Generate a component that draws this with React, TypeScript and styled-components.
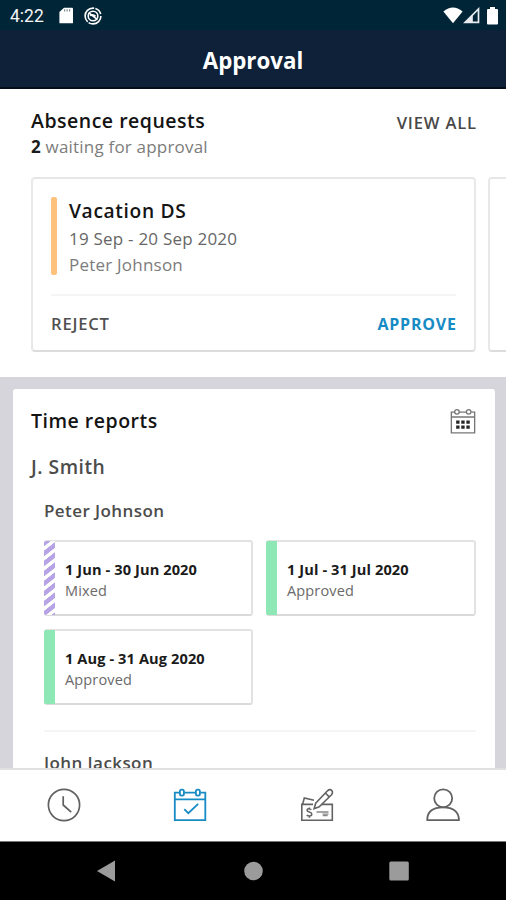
import React from 'react';
import styled, { createGlobalStyle } from 'styled-components';

const GlobalStyle = createGlobalStyle`
  *, *::before, *::after { box-sizing: border-box; }
  body { margin: 0; background: #fff; }
  svg { display: block; flex: none; }
`;

const Screen = styled.div`
  width: 506px;
  height: 900px;
  display: flex;
  flex-direction: column;
  overflow: hidden;
  background: #d6d5dc;
  font-family: 'Open Sans', sans-serif;
  color: #1b1b1b;
`;

const StatusBar = styled.div`
  flex: none;
  height: 30px;
  display: flex;
  align-items: center;
  padding: 1px 8px 0 10px;
  background: #002536;
  color: #f4f6f7;
`;

const Clock = styled.span`
  width: 49px;
  font: 400 17.5px/20px Roboto, sans-serif;
`;

const StatusGroup = styled.div<{ $gap: number; $end?: boolean }>`
  display: flex;
  align-items: center;
  gap: ${(p) => p.$gap}px;
  margin-left: ${(p) => (p.$end ? 'auto' : '0')};
`;

const Header = styled.header`
  flex: none;
  height: 59px;
  display: flex;
  justify-content: center;
  background: #0e2138;
  border-bottom: 2px solid #050d18;
`;

const Title = styled.h1`
  margin: 0;
  font-size: 22.3px;
  font-weight: 700;
  line-height: 61px;
  color: #fff;
`;

const Content = styled.main`
  flex: none;
  height: 679px;
  overflow: hidden;
`;

const AbsenceSection = styled.section`
  height: 288px;
  padding-top: 18px;
  background: #fff;
`;

const SectionHead = styled.div`
  display: flex;
  justify-content: space-between;
  padding: 0 30px 0 31px;
`;

const SectionTitle = styled.h2`
  margin: 0;
  font-size: 19.5px;
  font-weight: 600;
  line-height: 28px;
  letter-spacing: 0.5px;
  color: #141414;
`;

const Waiting = styled.p`
  margin: 0;
  font-size: 17px;
  font-weight: 400;
  line-height: 24px;
  letter-spacing: 0.2px;
  color: #7c7c7c;
  b { font-weight: 700; color: #1b1b1b; }
`;

const TextButton = styled.button<{ $color: string; $bold?: boolean }>`
  padding: 0;
  border: 0;
  background: none;
  font: ${(p) => (p.$bold ? '700 16px' : '600 16.6px')}/24px 'Open Sans', sans-serif;
  letter-spacing: 0.8px;
  margin-right: -0.8px;
  color: ${(p) => p.$color};
`;

const ViewAll = styled(TextButton)`
  align-self: flex-start;
  margin-top: 4px;
`;

const Carousel = styled.div`
  display: flex;
  gap: 12px;
  padding: 18px 0 0 31px;
  overflow: hidden;
`;

const RequestCard = styled.article`
  flex: none;
  width: 445px;
  height: 175px;
  padding: 18px 18px 0 18px;
  border: 2px solid;
  border-color: #e6e6e6 #e8e8e8 #dcdcdc #e8e8e8;
  border-radius: 4px;
`;

const RequestBody = styled.div`
  display: flex;
  gap: 12px;
  height: 99px;
  border-bottom: 2px solid #f5f5f5;
`;

const Stripe = styled.span`
  width: 6px;
  height: 78px;
  border-radius: 2px;
  background: #fdc27c;
`;

const RequestTitle = styled.h3`
  margin: 0;
  font-size: 19.2px;
  font-weight: 600;
  line-height: 28px;
  letter-spacing: 0.65px;
  color: #141414;
`;

const RequestDates = styled.p`
  margin: 0;
  font-size: 17px;
  line-height: 28px;
  letter-spacing: 0.22px;
  color: #666;
`;

const RequestPerson = styled(RequestDates)`
  line-height: 23px;
  color: #7c7c7c;
`;

const Actions = styled.div`
  display: flex;
  justify-content: space-between;
  padding-top: 16px;
`;

const ReportsCard = styled.section`
  margin: 12px 11px 0 13px;
  height: 400px;
  padding: 18px 19px 0 18px;
  border-radius: 3px;
  background: #fff;
`;

const ReportsHead = styled.div`
  display: flex;
  justify-content: space-between;
  align-items: flex-end;
`;

const Manager = styled.h3`
  margin: 18px 0 0;
  font-size: 19.3px;
  font-weight: 600;
  line-height: 28px;
  letter-spacing: 0.5px;
  color: #4c4c4c;
`;

const Employee = styled.h4`
  margin: 0;
  font-size: 17px;
  font-weight: 600;
  line-height: 24px;
  letter-spacing: 0.42px;
  color: #4c4c4c;
`;

const EmployeeBlock = styled.div`
  margin-left: 13px;
  padding-top: 18px;
  & + & { margin-top: 25px; padding-top: 19px; border-top: 2px solid #f5f5f5; }
`;

const PeriodGrid = styled.div`
  display: grid;
  grid-template-columns: 209px 210px;
  gap: 13px;
  margin-top: 17px;
`;

const PeriodCard = styled.div`
  display: flex;
  height: 76px;
  border: 2px solid #e2e2e2;
  border-bottom-color: #dadada;
  border-left: 0;
  border-radius: 3px;
`;

const PeriodMark = styled.span<{ $mixed?: boolean }>`
  flex: none;
  width: 11px;
  margin: -1px 0;
  border-radius: 2px 0 0 2px;
  background: ${(p) =>
    p.$mixed
      ? 'repeating-linear-gradient(142deg, #b6a4e6 0 3.9px, #fff 4.5px 7.4px, #b6a4e6 7.9px)'
      : '#8ee8b6'};
`;

const PeriodText = styled.div`
  padding: 17px 0 0 10px;
`;

const PeriodDates = styled.div`
  font-size: 14.6px;
  font-weight: 700;
  line-height: 21px;
  letter-spacing: 0.1px;
  color: #1b1b1b;
  white-space: nowrap;
`;

const PeriodStatus = styled.div`
  font-size: 14.5px;
  line-height: 21px;
  letter-spacing: 0.15px;
  color: #6a6a6a;
`;

const TabBar = styled.nav`
  flex: none;
  height: 74px;
  display: grid;
  grid-template-columns: repeat(4, 126.5px);
  justify-items: center;
  align-items: center;
  padding: 0 0 1px 0.7px;
  border-top: 2px solid #e0e0e3;
  border-bottom: 1px solid #777;
  background: #fff;
`;

const Tab = styled.button`
  padding: 0;
  border: 0;
  background: none;
`;

const SystemBar = styled.div`
  flex: none;
  height: 58px;
  display: flex;
  justify-content: space-between;
  align-items: center;
  padding: 0 96px;
  background: #000;
`;

const SdIcon = () => (
  <svg width="15" height="17" viewBox="0 0 15 17">
    <path d="M5 .7h8.1Q14 .7 14 1.6V15.4Q14 16.3 13.1 16.3H1.4Q.4 16.3.4 15.4V5Z" fill="#fff" />
    <path d="M5.6 2.3v2.2M8.1 2.3v2.2M10.6 2.3v2.2" stroke="#7c8c95" strokeWidth="1.2" />
  </svg>
);

const SyncIcon = () => (
  <svg width="18" height="18" viewBox="0 0 18 18" fill="none" stroke="#fff">
    <circle cx="9" cy="9" r="7.9" strokeWidth="1.6" strokeDasharray="17 1.2 20 1.2 8 2.2" />
    <circle cx="9" cy="9" r="4.8" strokeWidth="1.6" />
    <path d="M4.6 5.6 13.4 12.6M6 8.6Q9 6.8 11.6 9.4" strokeWidth="1.5" />
  </svg>
);

const WifiIcon = () => (
  <svg width="20" height="17" viewBox="0 0 20 17">
    <path d="M.4 4.4Q10-3.6 19.6 4.4L10 16.3Z" fill="#fff" />
  </svg>
);

const SignalIcon = () => (
  <svg width="17" height="17" viewBox="0 0 17 17">
    <path d="M15.5 2V15.4H2.1Z" fill="none" stroke="#e8ecee" strokeWidth="1.7" />
    <path d="M9.8 7.5V16H2Z" fill="#e8ecee" />
  </svg>
);

const BatteryIcon = styled(({ className }: { className?: string }) => (
  <svg className={className} width="11" height="18" viewBox="0 0 11 18">
    <path d="M3 0h5v2h2Q11 2 11 3V16.5Q11 17.5 10 17.5H1Q0 17.5 0 16.5V3Q0 2 1 2h2Z" fill="#fff" />
  </svg>
))`
  margin-left: 7px;
`;

const CalendarGridIcon = () => (
  <svg width="26" height="27" viewBox="0 0 27 27" fill="none" stroke="#777" strokeWidth="1.4">
    <path d="M4.5 3.8H1.4V25.3H25.6V3.8H22.2M9.5 3.8H17.5M1.4 8.8H25.6" />
    <circle cx="7.2" cy="3.5" r="2.4" />
    <circle cx="19.4" cy="3.5" r="2.4" />
    <path d="M6.4 14.2H20.5M6.4 19.3H20.5" stroke="#252525" strokeWidth="3.4" strokeDasharray="3.5 1.8" />
  </svg>
);

const ClockIcon = () => (
  <svg width="34" height="34" viewBox="0 0 34 34" fill="none" stroke="#606060" strokeWidth="1.7">
    <circle cx="17" cy="17" r="15.6" />
    <path d="M16.2 8.3V17L24.2 24.2" />
  </svg>
);

const CalendarCheckIcon = () => (
  <svg width="34" height="34" viewBox="0 0 34 34" fill="none" stroke="#168bc4" strokeWidth="1.8">
    <path d="M6.4 4.6H1.8V32.2H32.3V4.6H27.5M11.2 4.6H22.5M1.8 11.3H32.3" />
    <rect x="6.9" y="1.6" width="4" height="6" rx="1.6" />
    <rect x="22.9" y="1.6" width="4" height="6" rx="1.6" />
    <path d="M11.3 21.2 15.3 25.2 25.2 15.8" />
  </svg>
);

const ChequeIcon = () => (
  <svg width="34" height="34" viewBox="0 0 34 34" fill="none" stroke="#636363" strokeWidth="1.6">
    <path d="M13 16.4H1.8V32.2H32.3V16.4H22M2.6 16.4 4.3 10 14 12.2" />
    <path d="M14.1 20.7 15.7 15.2 27.5 2.8Q29.8.6 31.6 2.4T31.5 6.7L19.2 18.8ZM25.4 5 29.2 8.9" />
    <path d="M11.4 21.6Q7.2 19.6 7.1 22.2C7 24.7 11.9 23.5 11.8 26.2 11.6 28.8 7.8 28 6.7 27.2M9.4 19.4V21M9.4 28V29.7" />
    <path d="M16.5 24H28.5M22.5 26.2H28.5M22.8 27.7H27.6" stroke="#888" strokeWidth="1.3" />
  </svg>
);

const PersonIcon = () => (
  <svg width="34" height="34" viewBox="0 0 34 34" fill="none" stroke="#636363" strokeWidth="1.8">
    <circle cx="17.2" cy="10.3" r="9" />
    <path d="M1.2 32.2Q1.2 19.3 17 19.3T33 32.2Z" strokeLinejoin="round" />
  </svg>
);

const BackIcon = () => (
  <svg width="20" height="22" viewBox="0 0 20 22"><path d="M1 11 19 .6V21.4Z" fill="#9b9b9b" /></svg>
);
const HomeIcon = () => (
  <svg width="22" height="20" viewBox="0 0 22 20"><circle cx="12.5" cy="10" r="9.3" fill="#9b9b9b" /></svg>
);
const RecentsIcon = () => (
  <svg width="22" height="20" viewBox="0 0 22 20"><rect x="1.3" y=".4" width="19.5" height="19.2" rx="1.5" fill="#9b9b9b" /></svg>
);

interface Period { dates: string; status: string; mixed?: boolean }

const periods: Period[] = [
  { dates: '1 Jun - 30 Jun 2020', status: 'Mixed', mixed: true },
  { dates: '1 Jul - 31 Jul 2020', status: 'Approved' },
  { dates: '1 Aug - 31 Aug 2020', status: 'Approved' },
];

export default function App() {
  return (
    <Screen>
      <GlobalStyle />
      <StatusBar>
        <Clock>4:22</Clock>
        <StatusGroup $gap={10}><SdIcon /><SyncIcon /></StatusGroup>
        <StatusGroup $gap={0} $end>
          <WifiIcon /><SignalIcon /><BatteryIcon />
        </StatusGroup>
      </StatusBar>
      <Header><Title>Approval</Title></Header>
      <Content>
        <AbsenceSection>
          <SectionHead>
            <div>
              <SectionTitle>Absence requests</SectionTitle>
              <Waiting><b>2</b> waiting for approval</Waiting>
            </div>
            <ViewAll $color="#484848">VIEW ALL</ViewAll>
          </SectionHead>
          <Carousel>
            <RequestCard>
              <RequestBody>
                <Stripe />
                <div>
                  <RequestTitle>Vacation DS</RequestTitle>
                  <RequestDates>19 Sep - 20 Sep 2020</RequestDates>
                  <RequestPerson>Peter Johnson</RequestPerson>
                </div>
              </RequestBody>
              <Actions>
                <TextButton $color="#505050">REJECT</TextButton>
                <TextButton $color="#168bc4" $bold>APPROVE</TextButton>
              </Actions>
            </RequestCard>
            <RequestCard />
          </Carousel>
        </AbsenceSection>
        <ReportsCard>
          <ReportsHead>
            <SectionTitle>Time reports</SectionTitle>
            <CalendarGridIcon />
          </ReportsHead>
          <Manager>J. Smith</Manager>
          <EmployeeBlock>
            <Employee>Peter Johnson</Employee>
            <PeriodGrid>
              {periods.map((p) => (
                <PeriodCard key={p.dates}>
                  <PeriodMark $mixed={p.mixed} />
                  <PeriodText>
                    <PeriodDates>{p.dates}</PeriodDates>
                    <PeriodStatus>{p.status}</PeriodStatus>
                  </PeriodText>
                </PeriodCard>
              ))}
            </PeriodGrid>
          </EmployeeBlock>
          <EmployeeBlock>
            <Employee>John Jackson</Employee>
          </EmployeeBlock>
        </ReportsCard>
      </Content>
      <TabBar>
        <Tab aria-label="Time"><ClockIcon /></Tab>
        <Tab aria-label="Approval"><CalendarCheckIcon /></Tab>
        <Tab aria-label="Expenses"><ChequeIcon /></Tab>
        <Tab aria-label="Profile"><PersonIcon /></Tab>
      </TabBar>
      <SystemBar><BackIcon /><HomeIcon /><RecentsIcon /></SystemBar>
    </Screen>
  );
}
